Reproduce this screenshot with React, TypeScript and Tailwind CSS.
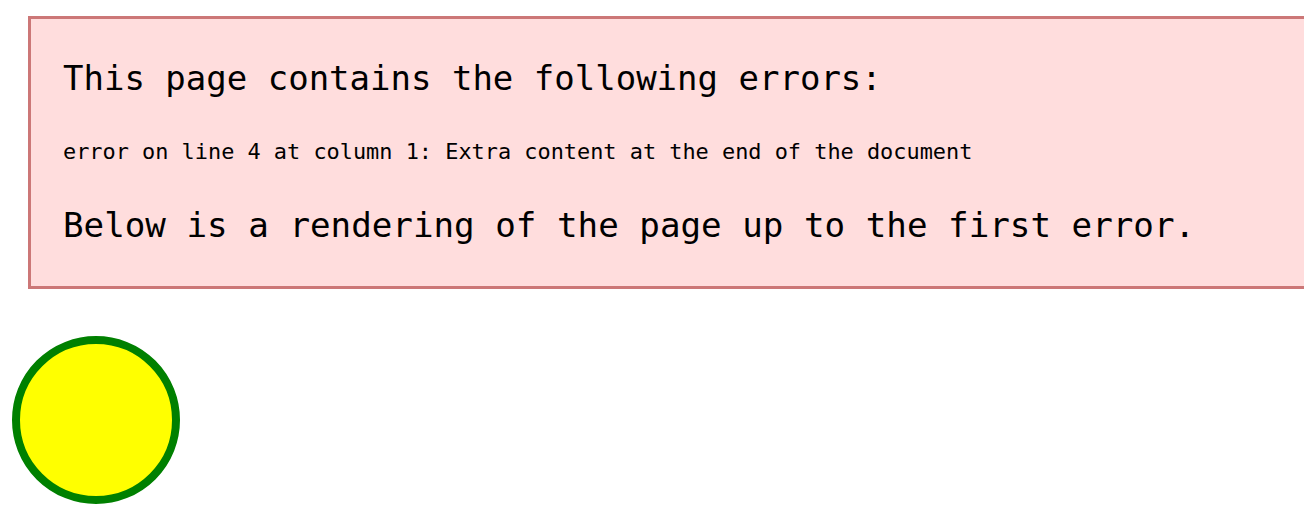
export default function App() {
  const mono = { fontFamily: '"DejaVu Sans Mono", "Liberation Mono", monospace' };
  return (
    <div className="h-[530px] w-[1304px] overflow-hidden bg-white text-black" style={mono}>
      <div className="pt-[16px]">
        <div className="ml-[28px] w-[1300px] border-[3px] border-[#cc7777] bg-[#ffdddd] pl-[32px] pb-[41px]">
          <h3 className="mt-[39px] h-[40px] whitespace-pre text-[34px] leading-[40px] font-normal">
            This page contains the following errors:
          </h3>
          <div className="mt-[41px] h-[26px] whitespace-pre text-[21.9px] leading-[26px]">
            error on line 4 at column 1: Extra content at the end of the document
          </div>
          <h3 className="mt-[40px] h-[40px] whitespace-pre text-[34.2px] leading-[40px] font-normal">
            Below is a rendering of the page up to the first error.
          </h3>
        </div>
      </div>
      <svg width="200" height="200" className="mt-[26px] block">
        <circle cx="96" cy="105" r="80" stroke="#008000" strokeWidth="8" fill="#ffff00" />
      </svg>
    </div>
  );
}
